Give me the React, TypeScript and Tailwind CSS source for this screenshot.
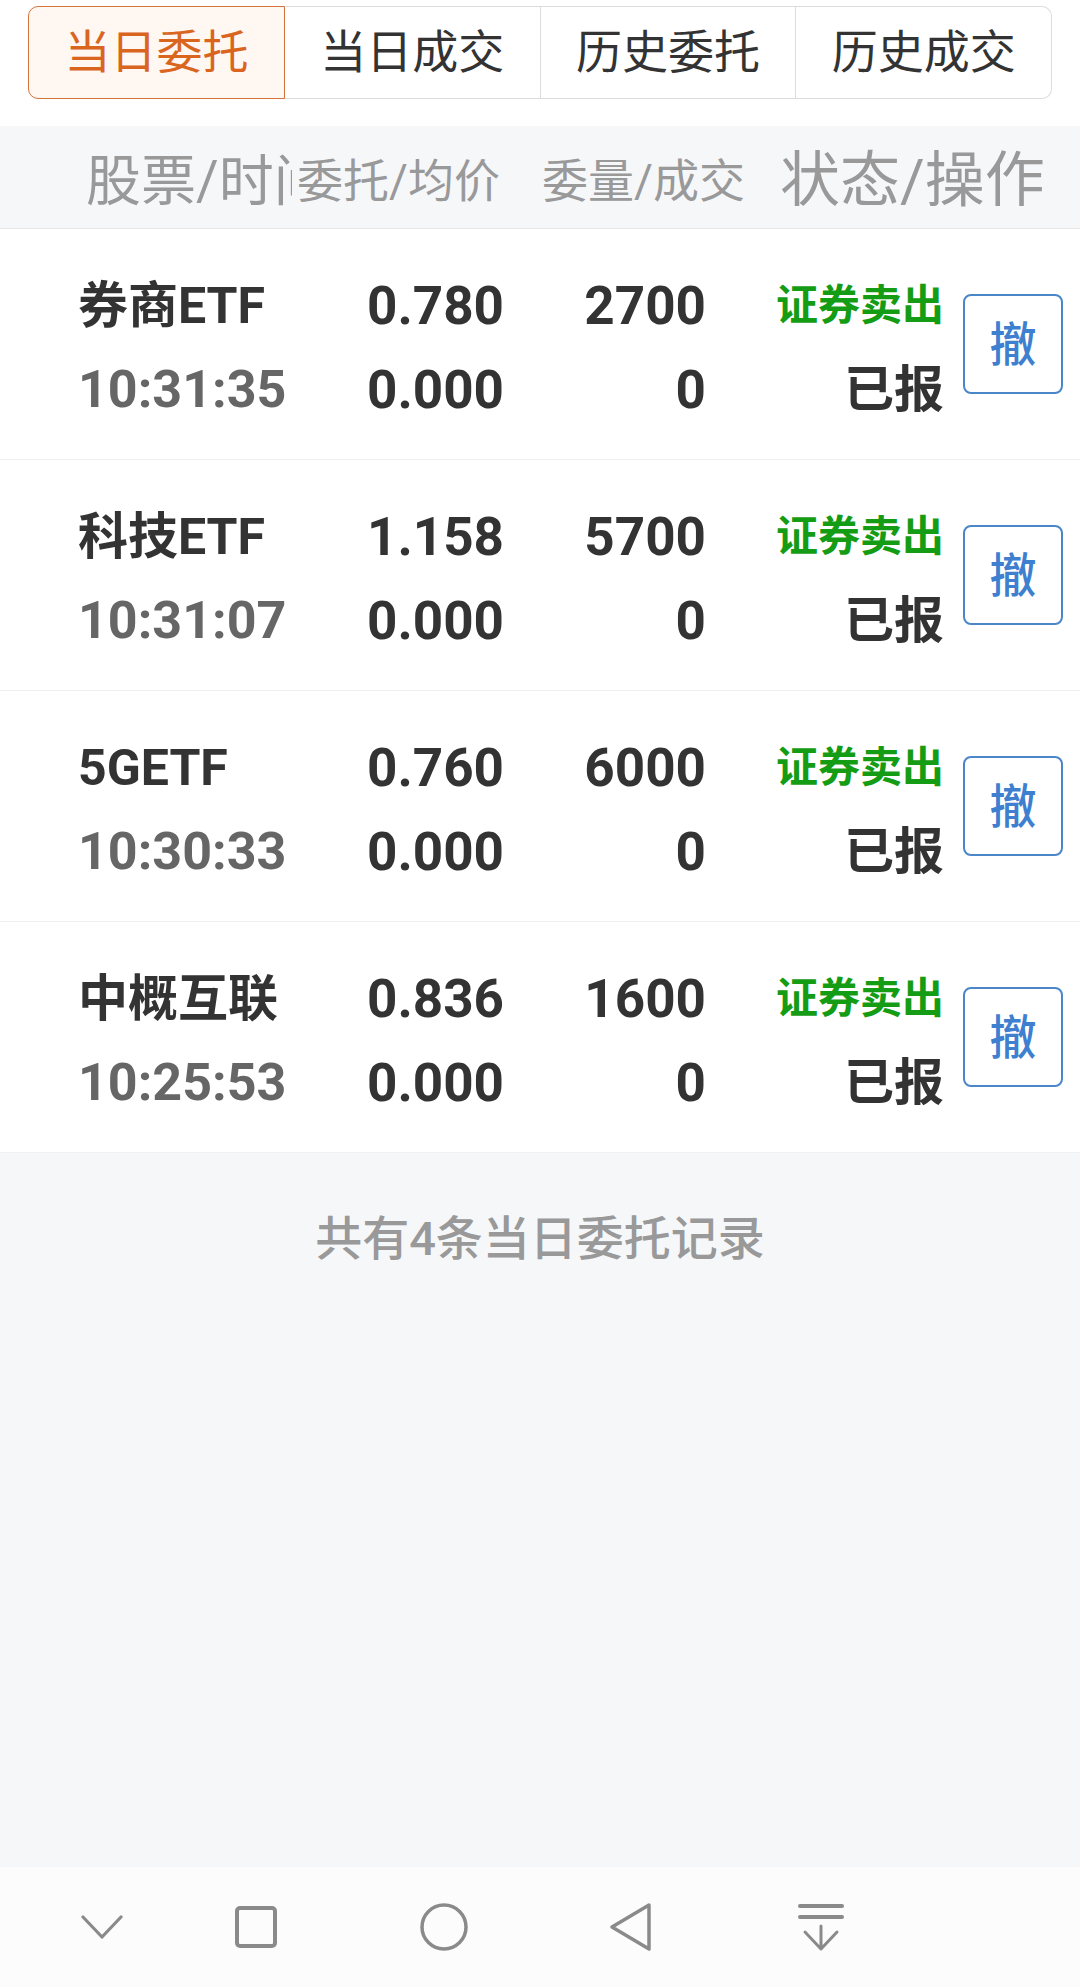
import React from 'react';

const tabs = ['当日委托', '当日成交', '历史委托', '历史成交'];

const orders = [
  { name: '券商ETF', time: '10:31:35', price: '0.780', avg: '0.000', qty: '2700', done: '0' },
  { name: '科技ETF', time: '10:31:07', price: '1.158', avg: '0.000', qty: '5700', done: '0' },
  { name: '5GETF', time: '10:30:33', price: '0.760', avg: '0.000', qty: '6000', done: '0' },
  { name: '中概互联', time: '10:25:53', price: '0.836', avg: '0.000', qty: '1600', done: '0' },
];

function OrderRow({ o }: { o: (typeof orders)[number] }) {
  return (
    <div className="flex h-[231px] items-center border-b border-[#f0f0f0] bg-white">
      <div className="mt-[7px] flex items-start">
        <div className="ml-[78px] w-[212px] whitespace-nowrap">
          <div className="text-[50px] font-bold leading-[84px] text-[#333]">{o.name}</div>
          <div className="text-[52px] font-bold leading-[84px] text-[#666]">{o.time}</div>
        </div>
        <div className="w-[214px] text-right text-[53px] font-bold leading-[84px] text-[#333]">
          <div>{o.price}</div>
          <div>{o.avg}</div>
        </div>
        <div className="w-[202px] text-right text-[53px] font-bold leading-[84px] text-[#333]">
          <div>{o.qty}</div>
          <div>{o.done}</div>
        </div>
        <div className="w-[238px] text-right font-bold">
          <div className="text-[42px] leading-[84px] text-[#149c14]">证券卖出</div>
          <div className="text-[50px] leading-[84px] text-[#333]">已报</div>
        </div>
      </div>
      <button
        type="button"
        className="ml-[19px] flex h-[100px] w-[100px] items-center justify-center rounded-[8px] border-[2.5px] border-[#4a86c8] bg-white text-[47px] font-medium leading-none text-[#3f7fd0]"
      >
        撤
      </button>
    </div>
  );
}

export default function App() {
  return (
    <div className="flex h-[1987px] w-[1080px] flex-col bg-[#f6f7f9] font-['Roboto','Noto_Sans_CJK_SC',sans-serif]">
      <div className="bg-white px-[28px] pt-[6px] pb-[27px]">
        <div className="flex h-[93px]">
          {tabs.map((t, i) => (
            <div
              key={t}
              className={
                i === 0
                  ? 'flex flex-1 items-center justify-center rounded-l-[10px] border border-[#d4733a] bg-[#fff7f2] text-[46px] text-[#d9651f]'
                  : i === 3
                    ? 'flex flex-1 items-center justify-center rounded-r-[10px] border-y border-r border-[#dcdcdc] text-[46px] text-[#333]'
                    : 'flex flex-1 items-center justify-center border-y border-r border-[#dcdcdc] text-[46px] text-[#333]'
              }
            >
              {t}
            </div>
          ))}
        </div>
      </div>

      <div className="flex h-[103px] items-center whitespace-nowrap border-b border-[#e8e8e8] bg-[#f6f7f9] pt-[8px] text-[#999]">
        <div className="ml-[86px] w-[206px] overflow-hidden text-[55px] leading-none">股票/时间</div>
        <div className="w-[250px] pl-[5px] text-[46px] leading-none">委托/均价</div>
        <div className="w-[238px] text-[46px] leading-none">委量/成交</div>
        <div className="text-[60px] leading-none">状态/操作</div>
      </div>

      {orders.map(o => (
        <OrderRow key={o.time} o={o} />
      ))}

      <div className="flex-1 pt-[56px]">
        <p className="text-center text-[47px] font-medium leading-[60px] text-[#999]">共有4条当日委托记录</p>
      </div>

      <div className="flex h-[120px] items-center bg-[#fcfcfc]">
        <div className="ml-[72px] flex w-[60px] justify-center">
          <svg width="42" height="26" viewBox="0 0 42 26" fill="none">
            <path d="M2 3 L21 23 L40 3" stroke="#8a8a8a" strokeWidth="3.2" strokeLinecap="round" strokeLinejoin="round" />
          </svg>
        </div>
        <div className="ml-[94px] flex w-[60px] justify-center">
          <svg width="46" height="46" viewBox="0 0 46 46" fill="none">
            <rect x="4" y="4" width="38" height="38" rx="3" stroke="#8a8a8a" strokeWidth="4" />
          </svg>
        </div>
        <div className="ml-[128px] flex w-[60px] justify-center">
          <svg width="52" height="52" viewBox="0 0 52 52" fill="none">
            <circle cx="26" cy="26" r="22" stroke="#8a8a8a" strokeWidth="3.5" />
          </svg>
        </div>
        <div className="ml-[127px] flex w-[60px] justify-center">
          <svg width="46" height="52" viewBox="0 0 46 52" fill="none">
            <path d="M41 4 L4 26 L41 48 Z" stroke="#8a8a8a" strokeWidth="3.5" strokeLinejoin="round" />
          </svg>
        </div>
        <div className="ml-[130px] flex w-[60px] justify-center">
          <svg width="46" height="52" viewBox="0 0 46 52" fill="none">
            <path d="M2 5 H44 M2 16 H44" stroke="#8a8a8a" strokeWidth="4" strokeLinecap="round" />
            <path d="M23 25 V48 M7 31 L23 48 L39 31" stroke="#8a8a8a" strokeWidth="3" strokeLinecap="round" strokeLinejoin="round" />
          </svg>
        </div>
      </div>
    </div>
  );
}
